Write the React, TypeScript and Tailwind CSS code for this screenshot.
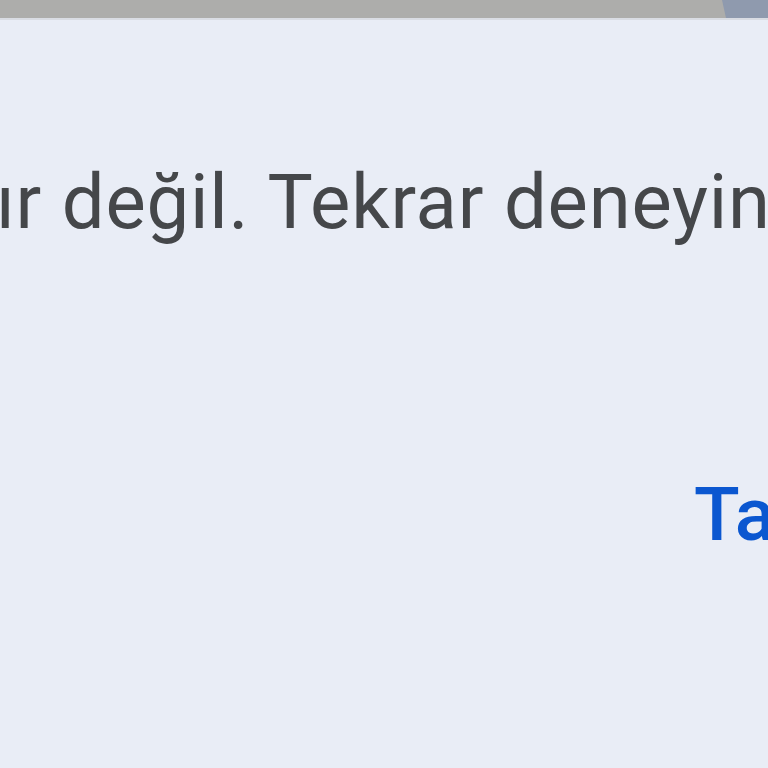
import React from 'react';

const App: React.FC = () => {
  return (
    <div className="w-[768px] h-[768px] overflow-hidden bg-[#e9edf6] flex flex-col" style={{ fontFamily: 'Roboto, "Noto Sans", sans-serif' }}>
      <div className="h-[18px] bg-[#adadab] flex justify-end shrink-0">
        <svg width="50" height="18" viewBox="0 0 50 18">
          <polygon points="4,0 50,0 50,18 8,18" fill="#8f9aae" />
        </svg>
      </div>
      <div className="h-[2px] bg-[#d9dce3] shrink-0" />
      <div className="pt-[145px] whitespace-nowrap">
        <p className="ml-[-4px] text-[76px] leading-[75px] text-[#45474a] tracking-[0.8px]">ır değil. Tekrar deneyin.</p>
      </div>
      <div className="mt-[237px] whitespace-nowrap">
        <button className="ml-[694px] text-[75px] leading-[75px] text-[#0b57d0] font-medium">Tamam</button>
      </div>
    </div>
  );
};

export default App;
